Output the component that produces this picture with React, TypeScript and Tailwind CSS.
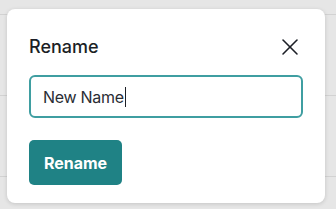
import { X } from "lucide-react";

export default function App() {
	return (
		<div className="relative h-[209px] w-[336px] overflow-hidden bg-[#e6e6e6] font-['Inter',sans-serif]">
			{/* table rows behind the overlay */}
			<div className="h-[15px] border-b border-[#d2d2d2]" />
			<div className="h-[81px] border-b border-[#d2d2d2]" />
			<div className="h-[81px] border-b border-[#d2d2d2]" />

			<div className="absolute left-[7px] top-[9px] flex h-[194px] w-[318px] flex-col rounded-[8px] bg-white px-[22px] pt-[26px] shadow-[0_1px_4px_rgba(0,0,0,0.15)]">
				<div className="flex h-[24px] items-center justify-between">
					<h2 className="text-[18px] font-medium leading-[24px] text-[#1c1f26]">Rename</h2>
					<button className="-mr-[1px] text-[#1c1f26]">
						<X size={28} strokeWidth={1.3} />
					</button>
				</div>
				<div className="mt-[16px] flex h-[43px] items-center rounded-[6px] border-2 border-[#3f9ea1] px-[12px]">
					<span className="text-[16px] tracking-[-0.3px] text-[#2a2d34]">New Name</span>
					<span className="ml-[1px] h-[20px] w-[1px] bg-[#1c1f26]" />
				</div>
				<div className="mt-[22px]">
					<button className="h-[45px] w-[93px] rounded-[5px] bg-[#1f8285] text-[16px] font-bold text-white">
						Rename
					</button>
				</div>
			</div>
		</div>
	);
}
